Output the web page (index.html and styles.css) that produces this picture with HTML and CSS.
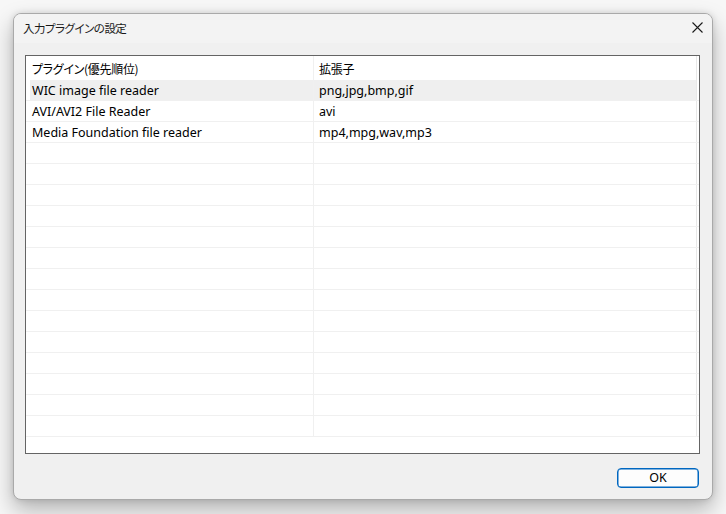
FILE: index.html
```html
<!DOCTYPE html>
<html lang="ja">
<head>
<meta charset="utf-8">
<title>入力プラグインの設定</title>
<link rel="stylesheet" href="styles.css">
</head>
<body>
<div class="window">
  <div class="titlebar">
    <span class="title">入力プラグインの設定</span>
    <span class="close" aria-label="閉じる">
      <svg width="11" height="11" viewBox="0 0 11 11"><path d="M0.5 0.5 L10.5 10.5 M10.5 0.5 L0.5 10.5" stroke="#1a1a1a" stroke-width="1.1" fill="none"/></svg>
    </span>
  </div>
  <div class="content">
    <div class="listbox">
      <div class="row header">
        <div class="cell c1">プラグイン(優先順位)</div>
        <div class="cell c2">拡張子</div>
        <div class="cell c3"></div>
      </div>
      <div class="row selected">
        <div class="cell c1">WIC image file reader</div>
        <div class="cell c2">png,jpg,bmp,gif</div>
        <div class="cell c3"></div>
      </div>
      <div class="row">
        <div class="cell c1">AVI/AVI2 File Reader</div>
        <div class="cell c2">avi</div>
        <div class="cell c3"></div>
      </div>
      <div class="row">
        <div class="cell c1">Media Foundation file reader</div>
        <div class="cell c2">mp4,mpg,wav,mp3</div>
        <div class="cell c3"></div>
      </div>
      <div class="row"><div class="cell c1"></div><div class="cell c2"></div><div class="cell c3"></div></div>
      <div class="row"><div class="cell c1"></div><div class="cell c2"></div><div class="cell c3"></div></div>
      <div class="row"><div class="cell c1"></div><div class="cell c2"></div><div class="cell c3"></div></div>
      <div class="row"><div class="cell c1"></div><div class="cell c2"></div><div class="cell c3"></div></div>
      <div class="row"><div class="cell c1"></div><div class="cell c2"></div><div class="cell c3"></div></div>
      <div class="row"><div class="cell c1"></div><div class="cell c2"></div><div class="cell c3"></div></div>
      <div class="row"><div class="cell c1"></div><div class="cell c2"></div><div class="cell c3"></div></div>
      <div class="row"><div class="cell c1"></div><div class="cell c2"></div><div class="cell c3"></div></div>
      <div class="row"><div class="cell c1"></div><div class="cell c2"></div><div class="cell c3"></div></div>
      <div class="row"><div class="cell c1"></div><div class="cell c2"></div><div class="cell c3"></div></div>
      <div class="row"><div class="cell c1"></div><div class="cell c2"></div><div class="cell c3"></div></div>
      <div class="row"><div class="cell c1"></div><div class="cell c2"></div><div class="cell c3"></div></div>
      <div class="row"><div class="cell c1"></div><div class="cell c2"></div><div class="cell c3"></div></div>
      <div class="row"><div class="cell c1"></div><div class="cell c2"></div><div class="cell c3"></div></div>
    </div>
    <div class="buttons">
      <button class="btn">OK</button>
    </div>
  </div>
</div>
</body>
</html>
```
FILE: styles.css
```css
html, body {
  margin: 0;
  padding: 0;
}
body {
  width: 726px;
  height: 514px;
  overflow: hidden;
  background: #f7f7f7;
  font-family: "Noto Sans", "Noto Sans CJK JP", sans-serif;
  font-size: 12.5px;
  color: #000;
  padding: 13px 0 0 13px;
  box-sizing: border-box;
}
.window {
  width: 700px;
  height: 487px;
  box-sizing: border-box;
  background: #f0f0f0;
  border: 1px solid #a9a9a9;
  border-radius: 8px;
  box-shadow: 0 10px 22px rgba(0, 0, 0, 0.28), 0 0 6px rgba(0, 0, 0, 0.12);
  display: flex;
  flex-direction: column;
  overflow: hidden;
}
.titlebar {
  height: 29px;
  background: #f3f3f3;
  display: flex;
  align-items: flex-start;
  justify-content: space-between;
  padding: 0 9px 0 9px;
  box-sizing: border-box;
  flex: none;
}
.title {
  font-family: "Noto Sans CJK JP", sans-serif;
  font-feature-settings: "palt" 1;
  font-size: 11.5px;
  letter-spacing: -0.5px;
  line-height: 16px;
  color: #1a1a1a;
  margin-top: 6px;
}
.close {
  width: 11px;
  height: 11px;
  display: flex;
  margin-top: 8px;
}
.content {
  flex: 1;
  display: flex;
  flex-direction: column;
  padding: 12px 12px 0 11px;
}
.listbox {
  height: 399px;
  box-sizing: border-box;
  border: 1px solid #646464;
  background: #fff;
  overflow: hidden;
  flex: none;
}
.row {
  display: flex;
  height: 21px;
  box-sizing: border-box;
  border-bottom: 1px solid #f0f0f0;
}
.row.header {
  height: 24px;
  border-bottom: none;
}
.row.selected .c1,
.row.selected .c2 {
  background: #efefef;
}
.row.selected .c1 {
  margin-left: 4px;
  width: 284px;
  padding-left: 2px;
}
.cell {
  box-sizing: border-box;
  display: flex;
  align-items: center;
  white-space: nowrap;
  overflow: hidden;
}
.c1 {
  width: 288px;
  padding-left: 6px;
  border-right: 1px solid #f0f0f0;
}
.c2 {
  width: 383px;
  padding-left: 5px;
  border-right: 1px solid #e8e8e8;
}
.c3 {
  flex: 1;
}
.header .cell {
  font-family: "Noto Sans CJK JP", sans-serif;
  font-feature-settings: "palt" 1;
  font-size: 12px;
  letter-spacing: -0.3px;
}
.buttons {
  display: flex;
  justify-content: flex-end;
  padding-top: 14px;
  padding-right: 1px;
}
.btn {
  width: 82px;
  height: 20px;
  box-sizing: border-box;
  border: 1px solid #0067c0;
  box-shadow: inset 0 0 0 0.5px #0067c0;
  border-radius: 4px;
  background: #fdfdfd;
  font-family: "Noto Sans", sans-serif;
  font-size: 12.5px;
  color: #000;
  padding: 0;
  line-height: 18px;
}
```
